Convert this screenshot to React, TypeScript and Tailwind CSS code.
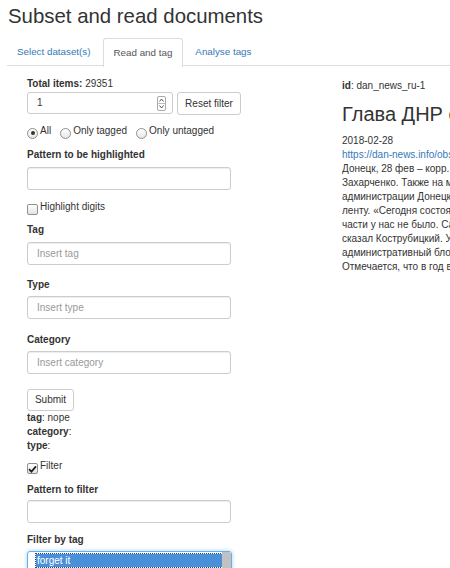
import React from 'react';

const Label: React.FC<{ children: React.ReactNode; className?: string }> = ({ children, className = '' }) => (
  <div className={`font-bold h-[14px] ${className}`}>{children}</div>
);

const TextInput: React.FC<{ placeholder?: string; className?: string }> = ({ placeholder, className = '' }) => (
  <div className={`w-[204px] h-[23px] border border-[#ccc] rounded-[3px] bg-white shadow-[inset_0_1px_1px_rgba(0,0,0,0.075)] flex items-center px-[9px] text-[#999] ${className}`}>
    {placeholder}
  </div>
);

const Radio: React.FC<{ checked?: boolean; label: string }> = ({ checked, label }) => (
  <span className="flex items-center gap-[2px]">
    <span className="w-[11px] h-[11px] rounded-full border border-[#8f8f8f] bg-gradient-to-b from-white to-[#e6e6e6] flex items-center justify-center mt-[2px]">
      {checked && <span className="w-[4px] h-[4px] rounded-full bg-[#333]" />}
    </span>
    <span className="-mt-[2px]">{label}</span>
  </span>
);

const Checkbox: React.FC<{ checked?: boolean; label: string }> = ({ checked, label }) => (
  <div className="flex items-start gap-[2px] h-[14px]">
    <span className="w-[11px] h-[11px] mt-[4px] rounded-[2px] border border-[#8f8f8f] bg-gradient-to-b from-white to-[#e3e3e3] flex items-center justify-center">
      {checked && (
        <svg width="9" height="8" viewBox="0 0 9 8">
          <path d="M1 4.2 L3.4 6.6 L8 1.4" fill="none" stroke="#222" strokeWidth="1.8" />
        </svg>
      )}
    </span>
    <span>{label}</span>
  </div>
);

const Button: React.FC<{ children: React.ReactNode; className?: string }> = ({ children, className = '' }) => (
  <div className={`border border-[#ccc] rounded-[3px] bg-white text-[#333] flex items-center justify-center ${className}`}>
    {children}
  </div>
);

const docLines = [
  'Донецк, 28 фев – корр. ДАН. Глава Донецкой Народной Республики Александр',
  'Захарченко. Также на месте присутствовал глава',
  'администрации Донецка Алексей Кострубицкий, который перерезал',
  'ленту. «Сегодня состоялось открытие после капитального ремонта,',
  'части у нас не было. Самое главное – мы сделали это для людей»,',
  'сказал Кострубицкий. Учреждение включает в себя',
  'административный блок и стационар.',
  'Отмечается, что в год в учреждении проходят лечение',
];

export default function App() {
  return (
    <div className="w-[450px] h-[568px] overflow-hidden bg-white text-[#333] text-[10px] leading-[14px] font-['Liberation_Sans',Arial,sans-serif] px-[7px]">
      <h2 className="text-[20.4px] leading-[24px] font-normal pt-[4px] pl-[1px] whitespace-nowrap">Subset and read documents</h2>

      <ul className="flex mt-[10px] border-b border-[#ddd] h-[28px] w-[443px] text-[9.8px]">
        <li className="px-[10px] h-[28px] flex items-center text-[#337ab7] mr-[2px]">Select dataset(s)</li>
        <li className="px-[10px] h-[29px] flex items-center text-[#555] bg-white border border-[#ddd] border-b-0 rounded-t-[3px] mr-[2px]">Read and tag</li>
        <li className="px-[10px] h-[28px] flex items-center text-[#337ab7]">Analyse tags</li>
      </ul>

      <div className="flex">
        <div className="w-[335px] shrink-0 pl-[20px]">
          <div className="mt-[11px] h-[14px]">
            <span className="font-bold">Total items:</span> 29351
          </div>
          <div className="flex mt-[1px] gap-[4px]">
            <div className="w-[146px] h-[22px] border border-[#ccc] rounded-[3px] flex items-center pl-[9px] pr-[6px] justify-between">
              <span>1</span>
              <span className="w-[9px] h-[15px] border border-[#aaa] rounded-[2px] flex flex-col items-center justify-center">
                <svg width="5" height="4" viewBox="0 0 5 4"><path d="M0.5 3.5 L2.5 1 L4.5 3.5" fill="none" stroke="#444" strokeWidth="0.9" /></svg>
                <span className="w-full h-px bg-[#bbb] my-[1px]" />
                <svg width="5" height="4" viewBox="0 0 5 4"><path d="M0.5 0.5 L2.5 3 L4.5 0.5" fill="none" stroke="#444" strokeWidth="0.9" /></svg>
              </span>
            </div>
            <Button className="w-[64px] h-[23px]">Reset filter</Button>
          </div>

          <div className="flex items-center gap-[9px] mt-[10px] h-[14px]">
            <Radio checked label="All" />
            <Radio label="Only tagged" />
            <Radio label="Only untagged" />
          </div>

          <Label className="mt-[9px]">Pattern to be highlighted</Label>
          <TextInput className="mt-[5px]" />

          <div className="mt-[10px]">
            <Checkbox label="Highlight digits" />
          </div>

          <Label className="mt-[9px]">Tag</Label>
          <TextInput className="mt-[5px]" placeholder="Insert tag" />

          <Label className="mt-[13px]">Type</Label>
          <TextInput className="mt-[4px]" placeholder="Insert type" />

          <Label className="mt-[14px]">Category</Label>
          <TextInput className="mt-[4px]" placeholder="Insert category" />

          <Button className="w-[47px] h-[22px] mt-[15px]">Submit</Button>
          <div className="h-[14px]"><span className="font-bold">tag</span>: nope</div>
          <div className="h-[14px]"><span className="font-bold">category</span>:</div>
          <div className="h-[14px]"><span className="font-bold">type</span>:</div>

          <div className="mt-[6px]">
            <Checkbox checked label="Filter" />
          </div>

          <Label className="mt-[10px]">Pattern to filter</Label>
          <TextInput className="mt-[3px]" />

          <Label className="mt-[10px]">Filter by tag</Label>
          <div className="mt-[4px] w-[205px] h-[60px] border border-[#66afe9] rounded-[3px] shadow-[0_0_4px_rgba(102,175,233,0.6)] flex overflow-hidden">
            <div className="flex-1 pl-[8px] pt-[2px]">
              <div className="bg-[#4a90d9] text-white outline outline-1 outline-dotted outline-[#1c4f8a] h-[13px] leading-[13px] pl-[1px]">forget it</div>
            </div>
            <div className="w-[9px] bg-[#f0f0f0]">
              <div className="w-[9px] h-[40px] bg-[#c1c1c1]" />
            </div>
          </div>
        </div>

        <div className="whitespace-nowrap overflow-hidden w-[108px] shrink-0">
          <div className="mt-[13px] h-[14px]"><span className="font-bold">id</span>: dan_news_ru-1</div>
          <h3 className="text-[20px] leading-[22px] font-normal mt-[10px]">Глава ДНР осмотрел</h3>
          <div className="mt-[9px]">2018-02-28</div>
          <div className="text-[#337ab7]">https://dan-news.info/obshhestvo/glava-dnr</div>
          {docLines.map((l, i) => (
            <div key={i}>{l}</div>
          ))}
        </div>
      </div>
    </div>
  );
}
